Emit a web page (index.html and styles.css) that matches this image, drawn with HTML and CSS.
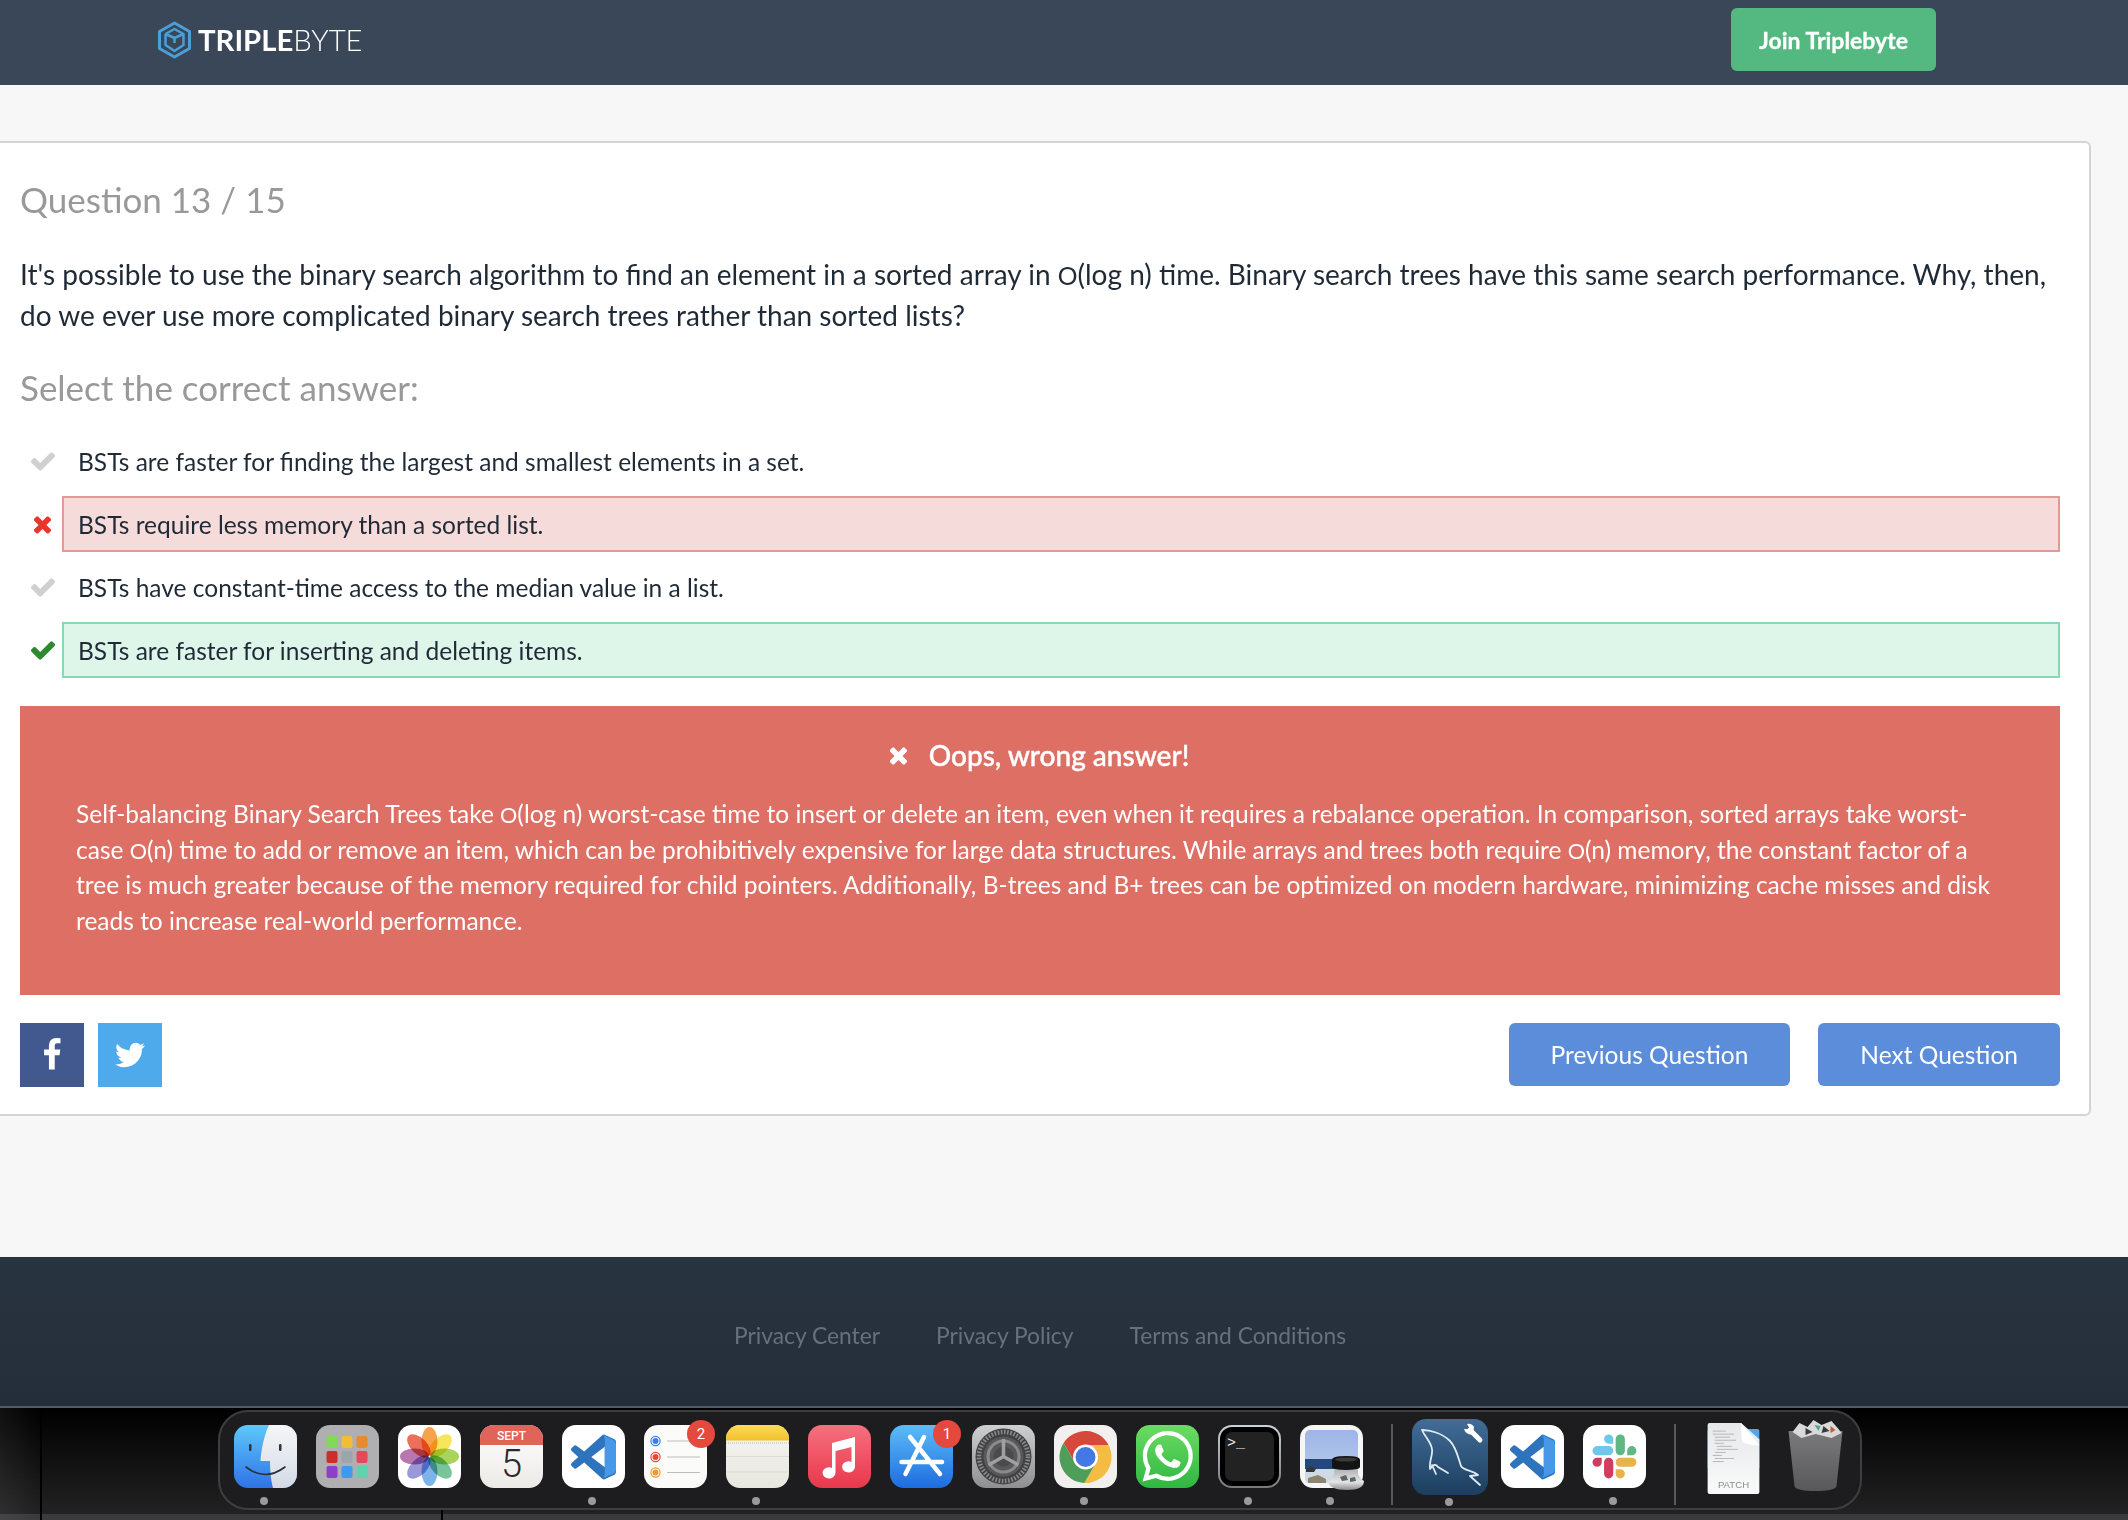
FILE: index.html
```html
<!DOCTYPE html>
<html lang="en">
<head>
<meta charset="utf-8">
<title>Triplebyte Quiz</title>
<link rel="stylesheet" href="styles.css">
</head>
<body>
<div class="page">
  <header class="topbar">
    <a class="brand">
      <svg class="brand-mark" viewBox="0 0 34 38"><path d="M17 2 L32 10.500 V27.500 L17 36 L2 27.500 V10.500 Z" fill="none" stroke="#4a9fd6" stroke-width="3" stroke-linejoin="round"/><path d="M8 13 L17 8 L26 13 V24 L17 30 L8 24 V13 M8 13 L17 17 L26 13 M17 17 V22" fill="none" stroke="#4a9fd6" stroke-width="2.500" stroke-linejoin="round"/></svg>
      <span class="brand-name"><b>TRIPLE</b><span class="brand-light">BYTE</span></span>
    </a>
    <a class="join">Join Triplebyte</a>
  </header>

  <main class="main">
    <section class="card">
      <h2 class="q-title">Question 13 / 15</h2>
      <p class="q-text">It's possible to use the binary search algorithm to find an element in a sorted array in <span class="bigo">O</span>(log n) time. Binary search trees have this same search performance. Why, then, do we ever use more complicated binary search trees rather than sorted lists?</p>
      <h3 class="q-sub">Select the correct answer:</h3>
      <ul class="options">
        <li class="option">
          <svg class="opt-icon" viewBox="0 0 1792 1792"><path class="fill-grey" d="M1671 566q0 40-28 68l-724 724-136 136q-28 28-68 28t-68-28l-136-136-362-362q-28-28-28-68t28-68l136-136q28-28 68-28t68 28l294 295 656-657q28-28 68-28t68 28l136 136q28 28 28 68z"/></svg>
          <div class="opt-box">BSTs are faster for finding the largest and smallest elements in a set.</div>
        </li>
        <li class="option">
          <svg class="opt-icon opt-x" viewBox="-156 0 1792 1792"><path class="fill-red" d="M1298 1322q0 40-28 68l-136 136q-28 28-68 28t-68-28l-294-294-294 294q-28 28-68 28t-68-28l-136-136q-28-28-28-68t28-68l294-294-294-294q-28-28-28-68t28-68l136-136q28-28 68-28t68 28l294 294 294-294q28-28 68-28t68 28l136 136q28 28 28 68t-28 68l-294 294 294 294q28 28 28 68z"/></svg>
          <div class="opt-box wrong">BSTs require less memory than a sorted list.</div>
        </li>
        <li class="option">
          <svg class="opt-icon" viewBox="0 0 1792 1792"><path class="fill-grey" d="M1671 566q0 40-28 68l-724 724-136 136q-28 28-68 28t-68-28l-136-136-362-362q-28-28-28-68t28-68l136-136q28-28 68-28t68 28l294 295 656-657q28-28 68-28t68 28l136 136q28 28 28 68z"/></svg>
          <div class="opt-box">BSTs have constant-time access to the median value in a list.</div>
        </li>
        <li class="option">
          <svg class="opt-icon" viewBox="0 0 1792 1792"><path class="fill-green" d="M1671 566q0 40-28 68l-724 724-136 136q-28 28-68 28t-68-28l-136-136-362-362q-28-28-28-68t28-68l136-136q28-28 68-28t68 28l294 295 656-657q28-28 68-28t68 28l136 136q28 28 28 68z"/></svg>
          <div class="opt-box right">BSTs are faster for inserting and deleting items.</div>
        </li>
      </ul>
      <div class="alert">
        <div class="alert-title">
          <svg class="alert-x" viewBox="-156 0 1792 1792"><path fill="#fff" d="M1298 1322q0 40-28 68l-136 136q-28 28-68 28t-68-28l-294-294-294 294q-28 28-68 28t-68-28l-136-136q-28-28-28-68t28-68l294-294-294-294q-28-28-28-68t28-68l136-136q28-28 68-28t68 28l294 294 294-294q28-28 68-28t68 28l136 136q28 28 28 68t-28 68l-294 294 294 294q28 28 28 68z"/></svg>
          <span>Oops, wrong answer!</span>
        </div>
        <p class="alert-text">Self-balancing Binary Search Trees take <span class="bigo">O</span>(log n) worst-case time to insert or delete an item, even when it requires a rebalance operation. In comparison, sorted arrays take worst-case <span class="bigo">O</span>(n) time to add or remove an item, which can be prohibitively expensive for large data structures. While arrays and trees both require <span class="bigo">O</span>(n) memory, the constant factor of a tree is much greater because of the memory required for child pointers. Additionally, B-trees and B+ trees can be optimized on modern hardware, minimizing cache misses and disk reads to increase real-world performance.</p>
      </div>
      <div class="actions">
        <div class="share">
          <a class="share-btn fb"><svg class="share-icon" viewBox="0 0 1792 1792"><path fill="#fff" d="M1343 12v264h-157q-86 0-116 36t-30 108v189h293l-39 296h-254v759h-306v-759h-255v-296h255v-218q0-186 104-288.500t277-102.500q147 0 228 12z"/></svg></a>
          <a class="share-btn tw"><svg class="share-icon" viewBox="0 0 1792 1792"><path fill="#fff" d="M1684 408q-67 98-162 167 1 14 1 42 0 130-38 259.500t-115.500 248.500-184.500 210.500-258 146-323 54.500q-271 0-496-145 35 4 78 4 225 0 401-138-105-2-188-64.500t-114-159.500q33 5 61 5 43 0 85-11-112-23-185.500-111.500t-73.500-205.500v-4q68 38 146 41-66-44-105-115t-39-154q0-88 44-163 121 149 294.500 238.500t371.500 99.500q-8-38-8-74 0-134 94.500-228.500t228.500-94.500q140 0 236 102 109-21 201-77-35 109-126 164 82-9 164-44z"/></svg></a>
        </div>
        <div class="nav-btns">
          <a class="btn">Previous Question</a>
          <a class="btn">Next Question</a>
        </div>
      </div>
    </section>
  </main>

  <footer class="footer">
    <a>Privacy Center</a>
    <a>Privacy Policy</a>
    <a>Terms and Conditions</a>
  </footer>

  <div class="desktop">
    <nav class="dock">
      <div class="dock-item"><svg class="tile" viewBox="0 0 63 63">
        <defs><linearGradient id="fb" x1="0" y1="0" x2="0" y2="1"><stop offset="0" stop-color="#5fc8fb"/><stop offset="1" stop-color="#2f72e6"/></linearGradient><linearGradient id="fw" x1="0" y1="0" x2="0" y2="1"><stop offset="0" stop-color="#f6f6f7"/><stop offset="1" stop-color="#d3dae6"/></linearGradient></defs>
        <rect width="63" height="63" fill="url(#fb)"/>
        <path d="M35 0 C30 10 27 26 26.500 36 L36 36 C36 46 37 56 39 63 H63 V0 Z" fill="url(#fw)"/>
        <rect x="15" y="19" width="2.500" height="7" rx="1.200" fill="#2c3440"/><rect x="45" y="19" width="2.500" height="7" rx="1.200" fill="#2c3440"/>
        <path d="M12 42 Q31 57 51 42" fill="none" stroke="#2a2f38" stroke-width="1.600" stroke-linecap="round"/>
      </svg><span class="dot"></span></div>

      <div class="dock-item"><svg class="tile" viewBox="0 0 63 63">
        <rect width="63" height="63" fill="#afafb1"/>
        <rect x="10.500" y="11" width="11" height="12" rx="2" fill="#82d957"/><rect x="25.500" y="11" width="11" height="12" rx="2" fill="#f2bc36"/><rect x="40.500" y="11" width="11" height="12" rx="2" fill="#e88a2e"/>
        <rect x="10.500" y="26" width="11" height="12" rx="2" fill="#cc2f27"/><rect x="25.500" y="26" width="11" height="12" rx="2" fill="#9aa6ac"/><rect x="40.500" y="26" width="11" height="12" rx="2" fill="#e6485a"/>
        <rect x="10.500" y="41" width="11" height="12" rx="2" fill="#8d3fc9"/><rect x="25.500" y="41" width="11" height="12" rx="2" fill="#3c9af0"/><rect x="40.500" y="41" width="11" height="12" rx="2" fill="#5dd3b0"/>
      </svg></div>

      <div class="dock-item"><svg class="tile" viewBox="0 0 63 63">
        <rect width="63" height="63" fill="#fff"/>
        <g class="petals">
          <ellipse class="petal" cx="31.500" cy="16.500" rx="8" ry="14.500" fill="#f7a24c"/>
          <ellipse class="petal" cx="31.500" cy="16.500" rx="8" ry="14.500" fill="#f7e65a" transform="rotate(45 31.500 31.500)"/>
          <ellipse class="petal" cx="31.500" cy="16.500" rx="8" ry="14.500" fill="#a9d45c" transform="rotate(90 31.500 31.500)"/>
          <ellipse class="petal" cx="31.500" cy="16.500" rx="8" ry="14.500" fill="#79c49a" transform="rotate(135 31.500 31.500)"/>
          <ellipse class="petal" cx="31.500" cy="16.500" rx="8" ry="14.500" fill="#7fb4ea" transform="rotate(180 31.500 31.500)"/>
          <ellipse class="petal" cx="31.500" cy="16.500" rx="8" ry="14.500" fill="#9c97d8" transform="rotate(225 31.500 31.500)"/>
          <ellipse class="petal" cx="31.500" cy="16.500" rx="8" ry="14.500" fill="#b877ae" transform="rotate(270 31.500 31.500)"/>
          <ellipse class="petal" cx="31.500" cy="16.500" rx="8" ry="14.500" fill="#ec6f5c" transform="rotate(315 31.500 31.500)"/>
        </g>
        <circle cx="31.500" cy="31.500" r="1" fill="#fff"/>
      </svg></div>

      <div class="dock-item"><svg class="tile" viewBox="0 0 63 63">
        <defs><linearGradient id="cal" x1="0" y1="0" x2="0" y2="1"><stop offset="0" stop-color="#fff"/><stop offset="1" stop-color="#eceae6"/></linearGradient></defs>
        <rect width="63" height="63" fill="url(#cal)"/>
        <rect width="63" height="20" fill="#e0645a"/>
        <text class="cal-month" x="31.500" y="15" text-anchor="middle">SEPT</text>
        <text class="cal-day" x="31.500" y="52" text-anchor="middle">5</text>
      </svg></div>

      <div class="dock-item"><svg class="tile" viewBox="0 0 63 63">
        <rect width="63" height="63" fill="#fff"/>
        <path transform="translate(9 9.500) scale(1.875)" fill="#2d74bd" d="M23.150 2.587L18.210.21a1.494 1.494 0 0 0-1.705.29l-9.460 8.630-4.120-3.128a.999.999 0 0 0-1.276.057L.327 7.261A1 1 0 0 0 .326 8.740L3.899 12 .326 15.260a1 1 0 0 0 .001 1.479L1.650 17.940a.999.999 0 0 0 1.276.057l4.120-3.128 9.460 8.630a1.492 1.492 0 0 0 1.704.29l4.942-2.377A1.500 1.500 0 0 0 24 20.060V3.939a1.500 1.500 0 0 0-.85-1.352zm-5.146 14.861L10.826 12l7.178-5.448v10.896z"/>
        <path d="M40 9.500 L51.500 15 Q54 16.300 54 19 V44.500 Q54 47.200 51.500 48.500 L40 53.500 Q42.800 52 42.800 49 V14 Q42.800 11 40 9.500Z" fill="#4798e8"/>
      </svg><span class="dot"></span></div>

      <div class="dock-item"><svg class="tile" viewBox="0 0 63 63">
        <rect width="63" height="63" fill="#fbfbfa"/>
        <circle cx="11.500" cy="16" r="4.600" fill="none" stroke="#3a7de8" stroke-width="1.200"/><circle cx="11.500" cy="16" r="3" fill="#3a7de8"/>
        <circle cx="11.500" cy="32" r="4.600" fill="none" stroke="#e5483c" stroke-width="1.200"/><circle cx="11.500" cy="32" r="3" fill="#e5483c"/>
        <circle cx="11.500" cy="47.500" r="4.600" fill="none" stroke="#ef9a34" stroke-width="1.200"/><circle cx="11.500" cy="47.500" r="3" fill="#ef9a34"/>
        <path d="M23 16 H56 M23 32 H56 M23 47.500 H56" stroke="#bdbdbd" stroke-width="1"/>
      </svg><span class="badge badge-two">2</span></div>

      <div class="dock-item"><svg class="tile" viewBox="0 0 63 63">
        <defs><linearGradient id="ny" x1="0" y1="0" x2="0" y2="1"><stop offset="0" stop-color="#fbdc55"/><stop offset="1" stop-color="#f2c02c"/></linearGradient><linearGradient id="np" x1="0" y1="0" x2="0" y2="1"><stop offset="0" stop-color="#f6f5f1"/><stop offset="1" stop-color="#e7e6df"/></linearGradient></defs>
        <rect width="63" height="63" fill="url(#np)"/>
        <rect width="63" height="15.500" fill="url(#ny)"/>
        <path d="M0 18 H63" stroke="#bdbcb6" stroke-width="1" stroke-dasharray="1 1"/>
        <path d="M0 31.500 H63 M0 47 H63" stroke="#dcdbd4" stroke-width="1"/>
      </svg><span class="dot"></span></div>

      <div class="dock-item"><svg class="tile" viewBox="0 0 63 63">
        <defs><linearGradient id="mu" x1="0" y1="0" x2="0" y2="1"><stop offset="0" stop-color="#f6707e"/><stop offset="1" stop-color="#e8384c"/></linearGradient></defs>
        <rect width="63" height="63" fill="url(#mu)"/>
        <path fill="#fff" d="M24 18 L47 12 V42 a6.500 5.500 0 1 1 -3.500 -5 V22 L27.500 26 V48 a6.500 5.500 0 1 1 -3.500 -5 Z"/>
      </svg></div>

      <div class="dock-item"><svg class="tile" viewBox="0 0 63 63">
        <defs><linearGradient id="as" x1="0" y1="0" x2="0" y2="1"><stop offset="0" stop-color="#5dbcf6"/><stop offset="1" stop-color="#1d6ce0"/></linearGradient></defs>
        <rect width="63" height="63" fill="url(#as)"/>
        <path d="M34 12 L15.500 49 M20 12 L50 49 M11.500 37 H52" stroke="#fff" stroke-width="4.500" stroke-linecap="round" fill="none"/>
      </svg><span class="badge badge-one">1</span></div>

      <div class="dock-item"><svg class="tile" viewBox="0 0 63 63">
        <defs><linearGradient id="se" x1="0" y1="0" x2="0" y2="1"><stop offset="0" stop-color="#cdcfd1"/><stop offset="1" stop-color="#8e8f91"/></linearGradient></defs>
        <rect width="63" height="63" fill="url(#se)"/>
        <circle cx="31.500" cy="31.500" r="28" fill="#414143"/>
        <circle cx="31.500" cy="31.500" r="24.500" fill="none" stroke="#8a8a8c" stroke-width="4.500" stroke-dasharray="1.600 1.600"/>
        <circle cx="31.500" cy="31.500" r="20" fill="#59595b"/>
        <circle cx="31.500" cy="31.500" r="15.500" fill="none" stroke="#8a8a8c" stroke-width="3"/>
        <circle cx="31.500" cy="31.500" r="10" fill="#4a4a4c"/>
        <path d="M31.500 31.500 V14 M31.500 31.500 L16.500 40 M31.500 31.500 L46.500 40" stroke="#a0a0a2" stroke-width="3.500" fill="none"/>
      </svg></div>

      <div class="dock-item"><svg class="tile" viewBox="0 0 63 63">
        <rect width="63" height="63" fill="#f1f0ee"/>
        <path fill="#d6483a" d="M9.580 18.030 A26 26 0 0 1 54.560 20 L31.500 20 L31.500 32 L21.110 38 Z"/>
        <path fill="#f4bc42" d="M54.560 20 A26 26 0 0 1 30.360 57.970 L41.890 38 L31.500 32 L31.500 20 Z"/>
        <path fill="#4e9e5a" d="M30.360 57.970 A26 26 0 0 1 9.580 18.030 L21.110 38 L31.500 32 L41.890 38 Z"/>
        <circle cx="31.500" cy="32" r="12.500" fill="#fff"/><circle cx="31.500" cy="32" r="10" fill="#4378e5"/>
      </svg><span class="dot"></span></div>

      <div class="dock-item"><svg class="tile" viewBox="0 0 63 63">
        <defs><linearGradient id="wa" x1="0" y1="0" x2="0" y2="1"><stop offset="0" stop-color="#6bdc64"/><stop offset="1" stop-color="#2fb741"/></linearGradient></defs>
        <rect width="63" height="63" fill="url(#wa)"/>
        <path transform="translate(6.500 6) scale(2.100)" fill="#fff" d="M17.472 14.382c-.297-.149-1.758-.867-2.030-.967-.273-.099-.471-.148-.670.150-.197.297-.767.966-.940 1.164-.173.199-.347.223-.644.075-.297-.150-1.255-.463-2.390-1.475-.883-.788-1.480-1.761-1.653-2.059-.173-.297-.018-.458.130-.606.134-.133.298-.347.446-.520.149-.174.198-.298.298-.497.099-.198.050-.371-.025-.520-.075-.149-.669-1.612-.916-2.207-.242-.579-.487-.500-.669-.510-.173-.008-.371-.010-.570-.010-.198 0-.520.074-.792.372-.272.297-1.040 1.016-1.040 2.479 0 1.462 1.065 2.875 1.213 3.074.149.198 2.096 3.200 5.077 4.487.709.306 1.262.489 1.694.625.712.227 1.360.195 1.871.118.571-.085 1.758-.719 2.006-1.413.248-.694.248-1.289.173-1.413-.074-.124-.272-.198-.570-.347m-5.421 7.403h-.004a9.870 9.870 0 01-5.031-1.378l-.361-.214-3.741.982.998-3.648-.235-.374a9.860 9.860 0 01-1.510-5.260c.001-5.450 4.436-9.884 9.888-9.884 2.640 0 5.122 1.030 6.988 2.898a9.825 9.825 0 012.893 6.994c-.003 5.450-4.437 9.884-9.885 9.884m8.413-18.297A11.815 11.815 0 0012.050 0C5.495 0 .160 5.335.157 11.892c0 2.096.547 4.142 1.588 5.945L.057 24l6.305-1.654a11.882 11.882 0 005.683 1.448h.005c6.554 0 11.890-5.335 11.893-11.893a11.821 11.821 0 00-3.480-8.413z"/>
      </svg></div>

      <div class="dock-item"><svg class="tile" viewBox="0 0 63 63">
        <defs><linearGradient id="te" x1="0" y1="0" x2="0" y2="1"><stop offset="0" stop-color="#c9d3da"/><stop offset="1" stop-color="#7a7a7c"/></linearGradient></defs>
        <rect width="63" height="63" fill="url(#te)"/>
        <rect x="2" y="2" width="59" height="59" rx="12" fill="#000"/>
        <rect x="7" y="7" width="49" height="49" rx="7" fill="#222"/>
        <text class="term" x="9" y="22">&gt;_</text>
      </svg><span class="dot"></span></div>

      <div class="dock-item"><svg class="tile tile-open" viewBox="0 0 63 63">
        <defs><linearGradient id="sk" x1="0" y1="0" x2="0" y2="1"><stop offset="0" stop-color="#9db5e8"/><stop offset="1" stop-color="#bccfe8"/></linearGradient><linearGradient id="jar" x1="0" y1="0" x2="0" y2="1"><stop offset="0" stop-color="#b4b6b8"/><stop offset=".6" stop-color="#e4e5e6"/><stop offset="1" stop-color="#8c8c8e"/></linearGradient></defs>
        <rect width="63" height="63" rx="13" fill="#f6f6f6"/>
        <rect x="5" y="5" width="53" height="53" rx="5" fill="url(#sk)"/>
        <rect x="5" y="34" width="53" height="10" fill="#24487c"/>
        <path d="M5 44 H58 V53 Q58 58 53 58 H10 Q5 58 5 53 Z" fill="#cfdbe4"/>
        <path d="M6 44 L11 41 L16 44 L14 47 L6 47 Z" fill="#34383c"/>
        <path d="M8 53 L18 50 L26 54 L26 58 L8 58 Z" fill="#8d8570"/>
        <path d="M34 45 H58 Q57 52 64 56 Q64 65 47 65 Q29 65 28 56 Q35 52 34 45 Z" fill="url(#jar)"/>
        <path d="M40 52 L46 50 L48 55 L42 56 Z M50 53 L55 52 L56 56 L50 57 Z" fill="#5f6468"/>
        <path d="M32 35 Q32 31 46 31 Q60 31 60 35 V42 Q60 45 46 45 Q32 45 32 42 Z" fill="#141414"/>
        <ellipse cx="46" cy="34.500" rx="11" ry="2" fill="#3a3a3a"/>
      </svg><span class="dot"></span></div>

      <span class="dock-sep"></span>

      <div class="dock-item dock-item-wide"><svg class="tile tile-wide" viewBox="0 0 76 76">
        <defs><linearGradient id="my" x1="0" y1="0" x2="0" y2="1"><stop offset="0" stop-color="#426d98"/><stop offset="1" stop-color="#1c3e5e"/></linearGradient></defs>
        <rect width="76" height="76" fill="url(#my)"/>
        <path d="M10 11 C18 11 30 14 38 22 C44 28 46 38 49 47 C52 52 60 51 66 56 L58 57 L68 66 M10 11 C13 18 19 23 20 30 C21 36 17 42 18 50 C21 45 24 45 26 48 L36 54 M20 46 L24 55" fill="none" stroke="#dfe9f2" stroke-width="1.800" stroke-linejoin="round" stroke-linecap="round"/>
        <path d="M58 11 L68 21" stroke="#fff" stroke-width="5" stroke-linecap="round"/>
        <path d="M52 10 A7 7 0 0 0 61 15 L62 8 A7 7 0 0 0 55 5 L58 10 Z" fill="#fff"/>
      </svg><span class="dot dot-wide"></span></div>

      <div class="dock-item"><svg class="tile" viewBox="0 0 63 63">
        <rect width="63" height="63" fill="#fff"/>
        <path transform="translate(9 9.500) scale(1.875)" fill="#2d74bd" d="M23.150 2.587L18.210.21a1.494 1.494 0 0 0-1.705.29l-9.460 8.630-4.120-3.128a.999.999 0 0 0-1.276.057L.327 7.261A1 1 0 0 0 .326 8.740L3.899 12 .326 15.260a1 1 0 0 0 .001 1.479L1.650 17.940a.999.999 0 0 0 1.276.057l4.120-3.128 9.460 8.630a1.492 1.492 0 0 0 1.704.29l4.942-2.377A1.500 1.500 0 0 0 24 20.060V3.939a1.500 1.500 0 0 0-.85-1.352zm-5.146 14.861L10.826 12l7.178-5.448v10.896z"/>
        <path d="M40 9.500 L51.500 15 Q54 16.300 54 19 V44.500 Q54 47.200 51.500 48.500 L40 53.500 Q42.800 52 42.800 49 V14 Q42.800 11 40 9.500Z" fill="#4798e8"/>
      </svg></div>

      <div class="dock-item"><svg class="tile" viewBox="0 0 63 63">
        <rect width="63" height="63" fill="#fff"/>
        <g transform="translate(9.500 9.500) scale(1.830)">
          <path fill="#d13d61" d="M5.042 15.165a2.528 2.528 0 0 1-2.520 2.523A2.528 2.528 0 0 1 0 15.165a2.527 2.527 0 0 1 2.522-2.520h2.520v2.520zM6.313 15.165a2.527 2.527 0 0 1 2.521-2.520 2.527 2.527 0 0 1 2.521 2.520v6.313A2.528 2.528 0 0 1 8.834 24a2.528 2.528 0 0 1-2.521-2.522v-6.313z"/>
          <path fill="#71c7ea" d="M8.834 5.042a2.528 2.528 0 0 1-2.521-2.520A2.528 2.528 0 0 1 8.834 0a2.528 2.528 0 0 1 2.521 2.522v2.520H8.834zM8.834 6.313a2.528 2.528 0 0 1 2.521 2.521 2.528 2.528 0 0 1-2.521 2.521H2.522A2.528 2.528 0 0 1 0 8.834a2.528 2.528 0 0 1 2.522-2.521h6.312z"/>
          <path fill="#5fb784" d="M18.956 8.834a2.528 2.528 0 0 1 2.522-2.521A2.528 2.528 0 0 1 24 8.834a2.528 2.528 0 0 1-2.522 2.521h-2.522V8.834zM17.688 8.834a2.528 2.528 0 0 1-2.523 2.521 2.527 2.527 0 0 1-2.520-2.521V2.522A2.527 2.527 0 0 1 15.165 0a2.528 2.528 0 0 1 2.523 2.522v6.312z"/>
          <path fill="#e8b34a" d="M15.165 18.956a2.528 2.528 0 0 1 2.523 2.522A2.528 2.528 0 0 1 15.165 24a2.527 2.527 0 0 1-2.520-2.522v-2.522h2.520zM15.165 17.688a2.527 2.527 0 0 1-2.520-2.523 2.526 2.526 0 0 1 2.520-2.520h6.313A2.527 2.527 0 0 1 24 15.165a2.528 2.528 0 0 1-2.522 2.523h-6.313z"/>
        </g>
      </svg><span class="dot"></span></div>

      <span class="dock-sep dock-sep-b"></span>

      <div class="dock-item dock-item-file"><svg class="file" viewBox="0 0 51 70">
        <defs><linearGradient id="pg" x1="0" y1="0" x2="0" y2="1"><stop offset="0" stop-color="#e6e8ea"/><stop offset="1" stop-color="#fafafa"/></linearGradient></defs>
        <rect x="0" y="6" width="51" height="40" rx="2" fill="#54a6e8"/>
        <path d="M2 0 H33 L51 16 V68 Q51 70 49 70 H2 Q0 70 0 68 V2 Q0 0 2 0 Z" fill="url(#pg)"/>
        <path d="M33 0 Q33 14 34 18 Q38 22 51 22 Z" fill="#fff"/>
        <path d="M5 8 H18 M5 11 H26 M7 14 H22 M7 17 H28 M7 20 H16 M9 23 H24 M9 26 H30 M7 29 H18 M5 32 H14 M7 35 H26 M5 38 H16" stroke="#a8adb2" stroke-width=".8"/>
        <text class="patch" x="25.500" y="64" text-anchor="middle">PATCH</text>
      </svg></div>

      <div class="dock-item dock-item-trash"><svg class="file trash" viewBox="0 0 56 72">
        <defs><linearGradient id="tr" x1="0" y1="0" x2="0" y2="1"><stop offset="0" stop-color="#7a7a7c"/><stop offset="1" stop-color="#58585a"/></linearGradient></defs>
        <path d="M1 11 H55 L49 66 Q48 71 28 71 Q8 71 7 66 Z" fill="url(#tr)"/>
        <path d="M5 12 L12 3 L20 7 L26 0 L34 5 L44 1 L51 9 L54 13 L44 18 L28 14 L14 18 Z" fill="#d9d9d9"/>
        <path d="M18 8 L25 12 L18 15 Z" fill="#3b3b3d"/><path d="M27 5 L33 6 L31 11 Z" fill="#4fa88e"/><path d="M36 6 L42 11 L34 13 Z" fill="#3b3b3d"/><path d="M43 6 L48 10 L43 13 Z" fill="#c8593e"/>
      </svg></div>
    </nav>
  </div>
</div>
</body>
</html>
```
FILE: styles.css
```css
* { box-sizing: border-box; }
html, body { margin: 0; padding: 0; }
body { font-family: Lato, "Noto Sans", sans-serif; color: #1f2a36; background: #f7f7f7; }
.page { width: 2128px; height: 1520px; overflow: hidden; display: flex; flex-direction: column; }

.topbar { height: 85px; flex: none; background: #3a4759; display: flex; align-items: center; justify-content: space-between; padding: 0 192px 0 157px; }
.brand { display: flex; align-items: center; gap: 6px; margin-top: -6px; }
.brand-mark { width: 35px; height: 38px; display: block; }
.brand-name { font-size: 29.300px; color: #fff; line-height: 1; }
.brand-name b { font-weight: 700; }
.brand-light { font-weight: 300; }
.join { width: 205px; height: 63px; margin-top: -6px; display: flex; align-items: center; justify-content: center; background: #54b881; border-radius: 6px; color: #fff; font-weight: 700; font-size: 23px; -webkit-text-stroke: .3px #fff; }

.main { height: 1172px; flex: none; padding-top: 56px; }
.card { margin-left: -10px; width: 2101px; height: 975px; background: #fff; border: 2px solid #d4d3d9; border-radius: 6px; padding: 34px 29px 0 28px; }
.q-title { margin: 0; font-size: 35px; line-height: 44px; font-weight: 400; color: #999; }
.q-text { margin: 33px 0 0; font-size: 28px; line-height: 41px; color: #1f2a36; }
.bigo { font-size: .88em; line-height: 0; }
.q-sub { margin: 29px 0 0; font-size: 35px; line-height: 44px; font-weight: 400; color: #999; }
.options { list-style: none; margin: 24px 0 0; padding: 0; display: flex; flex-direction: column; gap: 7px; }
.option { display: flex; align-items: center; height: 56px; }
.opt-icon { width: 28px; height: 28px; margin-left: 9px; margin-right: 5px; flex: none; }
.opt-x { width: 26px; height: 26px; margin-left: 10px; margin-right: 6px; }
.fill-grey { fill: #d0d0d0; }
.fill-red { fill: #e9352a; }
.fill-green { fill: #2f8a2f; }
.opt-box { flex: 1; height: 56px; display: flex; align-items: center; padding-left: 14px; border: 2px solid transparent; font-size: 24.500px; }
.opt-box.wrong { background: #f5dbd9; border-color: #e29a96; }
.opt-box.right { background: #def5ea; border-color: #8ad8b3; }

.alert { margin-top: 28px; height: 289px; background: #de6f64; color: #fff; padding: 30px 56px 0; }
.alert-title { display: flex; justify-content: center; align-items: center; gap: 17px; padding-right: 5px; font-size: 28px; line-height: 38px; font-weight: 500; -webkit-text-stroke: .4px #fff; }
.alert-x { width: 26px; height: 26px; }
.alert-text { margin: 22px 0 0; font-size: 24.500px; line-height: 35.700px; }

.actions { margin-top: 28px; display: flex; justify-content: space-between; }
.share { display: flex; gap: 14px; }
.share-btn { width: 64px; height: 64px; display: flex; align-items: center; justify-content: center; }
.share-btn.fb { background: #41598f; }
.share-btn.tw { background: #4eaaea; }
.share-icon { width: 34px; height: 34px; }
.nav-btns { display: flex; gap: 28px; }
.btn { height: 63px; padding: 0 42px; display: flex; align-items: center; background: #5b8ddb; border-radius: 6px; color: #fff; font-size: 24.500px; }

.footer { height: 149px; flex: none; background: linear-gradient(#28343f, #242e3a); display: flex; justify-content: center; align-items: center; gap: 56px; padding: 6px 48px 0 0; color: #65717e; font-size: 22.800px; }

.desktop { height: 114px; flex: none; border-top: 2px solid #4f5b69; padding: 2px 0 0 218px;
  background:
    linear-gradient(to right, transparent 40px, #000 40px, #000 42px, transparent 42px),
    linear-gradient(to right, rgba(255,255,255,.06), transparent 40px),
    linear-gradient(to right, transparent 441px, #000 441px, #000 443px, transparent 443px) 0 100% / 100% 10px no-repeat,
    linear-gradient(#000, #222 95%, #3a3a3c 95%);
}
.dock { width: 1644px; height: 100px; display: flex; align-items: flex-start; gap: 19px; padding: 13px 0 0 14px; background: #1d1d1f; border: 2px solid #3e3e41; border-radius: 30px; }
.dock-item { position: relative; flex: none; width: 63px; display: flex; flex-direction: column; align-items: center; }
.tile { width: 63px; height: 63px; display: block; border-radius: 14px; overflow: hidden; }
.tile-open { overflow: visible; }
.tile-wide { width: 76px; height: 76px; border-radius: 14px; }
.petal { mix-blend-mode: multiply; }
.petals { isolation: isolate; }
.dock-item-wide { width: 76px; margin-top: -6px; margin-right: -6px; }
.dot { width: 8px; height: 8px; margin-top: 9px; margin-right: 3px; border-radius: 50%; background: #9a9a9c; }
.dot-wide { margin-top: 3px; }
.dock-sep { flex: none; width: 2px; height: 81px; margin-left: 9px; margin-top: -1px; background: #58585a; }
.dock-sep-b { margin-left: 9px; }
.file { display: block; overflow: visible; }
.dock-item-file { width: 53px; margin-left: 12px; margin-top: -2px; }
.dock-item-file .file { width: 53px; height: 71px; }
.dock-item-trash { width: 57px; margin-left: 8px; margin-top: -5px; }
.dock-item-trash .file { width: 57px; height: 72px; }
.badge { position: absolute; top: -5px; right: -8px; width: 28px; height: 28px; border-radius: 50%; background: #e5483c; color: #fff; font-family: Roboto, sans-serif; font-size: 15px; display: flex; align-items: center; justify-content: center; }
.cal-month { font-family: Roboto, sans-serif; font-weight: 500; font-size: 12px; fill: #fff; }
.cal-day { font-family: Roboto, sans-serif; font-weight: 300; font-size: 38px; fill: #2a2a2a; }
.term { font-family: "Liberation Mono", monospace; font-size: 15px; fill: #eee; }
.patch { font-family: "Liberation Sans", sans-serif; font-size: 9.500px; fill: #8d8d8d; }
```
